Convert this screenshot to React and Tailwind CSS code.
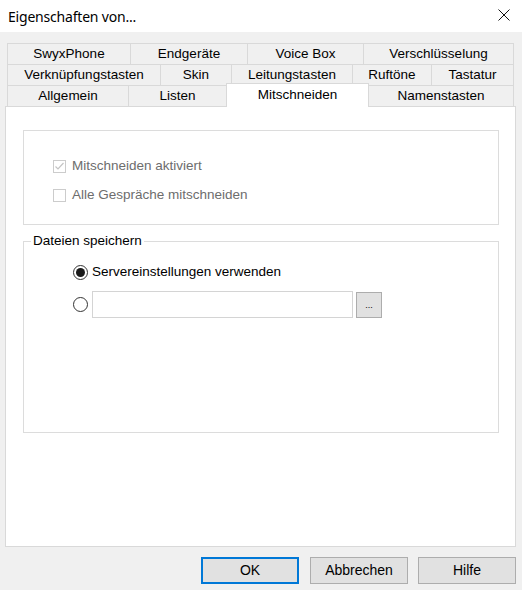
import React from "react";

const rows = [
  [
    ["SwyxPhone", 123],
    ["Endgeräte", 117],
    ["Voice Box", 116],
    ["Verschlüsselung", 151],
  ],
  [
    ["Verknüpfungstasten", 153],
    ["Skin", 71],
    ["Leitungstasten", 121],
    ["Ruftöne", 79],
    ["Tastatur", 83],
  ],
];

function Tab({ label, width, last }) {
  return (
    <div
      className={
        "h-[21px] flex items-center justify-center border-t border-l border-[#d9d9d9] bg-[#f0f0f0] text-black " +
        (last ? "border-r" : "")
      }
      style={{ width }}
    >
      {label}
    </div>
  );
}

function Checkbox({ checked, label }) {
  return (
    <div className="flex items-center h-[14px]">
      <div className="w-[13px] h-[13px] border border-[#cccccc] bg-white flex items-center justify-center">
        {checked && (
          <svg width="11" height="11" viewBox="0 0 11 11">
            <polyline points="1.5,5.5 4,8 9.5,2" fill="none" stroke="#c4c4c4" strokeWidth="1.2" />
          </svg>
        )}
      </div>
      <span className="ml-[6px] text-[#6d6d6d] text-[13.5px]">{label}</span>
    </div>
  );
}

function Radio({ checked }) {
  return (
    <div className="w-[15px] h-[15px] rounded-full border border-[#333333] bg-white flex items-center justify-center shrink-0">
      {checked && <div className="w-[9px] h-[9px] rounded-full bg-[#1a1a1a]" />}
    </div>
  );
}

function DialogButton({ children, primary, className = "" }) {
  return (
    <div
      className={
        "w-[98px] h-[27px] flex items-center justify-center bg-[#e1e1e1] text-black text-[14px] " +
        (primary ? "border-2 border-[#0078d7] " : "border border-[#adadad] ") +
        className
      }
    >
      {children}
    </div>
  );
}

export default function App() {
  return (
    <div
      className="w-[522px] h-[590px] bg-[#f0f0f0] text-[13.5px] overflow-hidden"
      style={{ fontFamily: '"Liberation Sans", Arial, sans-serif' }}
    >
      {/* title bar */}
      <div className="h-[32px] bg-white flex items-center justify-between pl-[8px] pr-[12px]">
        <span
          className="text-[14px] tracking-[-0.2px] text-black"
          style={{ fontFamily: '"Noto Sans", "Open Sans", sans-serif' }}
        >
          Eigenschaften von...
        </span>
        <svg width="12" height="12" viewBox="0 0 12 12" className="mt-[-2px]">
          <path d="M0.5 0.5 L11.5 11.5 M11.5 0.5 L0.5 11.5" stroke="#111" strokeWidth="1" />
        </svg>
      </div>

      <div className="pl-[5px] pt-[11px]">
        {/* tab strip */}
        <div className="pl-[2px]">
          {rows.map((row, i) => (
            <div key={i} className="flex">
              {row.map(([label, w], j) => (
                <Tab key={label} label={label} width={w} last={j === row.length - 1} />
              ))}
            </div>
          ))}
          <div className="flex h-[21px]">
            <Tab label="Allgemein" width={121} />
            <div className="w-[98px] h-[21px] flex items-center justify-center border-t border-l border-[#d9d9d9] bg-[#f0f0f0]">
              Listen
            </div>
            <div className="relative z-10 w-[143px] h-[24px] mt-[-2px] flex items-center justify-center border-t border-l border-r border-[#d9d9d9] bg-white">
              Mitschneiden
            </div>
            <div className="w-[145px] h-[21px] flex items-center justify-center border-t border-r border-[#d9d9d9] bg-[#f0f0f0]">
              Namenstasten
            </div>
          </div>
        </div>

        {/* page */}
        <div className="w-[511px] h-[441px] bg-white border border-[#d9d9d9] pl-[17px] pt-[23px]">
          <div className="w-[476px] h-[95px] border border-[#dcdcdc] pl-[29px] pt-[28px] flex flex-col gap-[15px]">
            <Checkbox checked label="Mitschneiden aktiviert" />
            <Checkbox label="Alle Gespräche mitschneiden" />
          </div>

          <div className="relative mt-[16px] w-[476px] h-[192px] border border-[#dcdcdc]">
            <span className="absolute left-[7px] top-[-9px] bg-white px-[2px] leading-[16px] text-black text-[13.5px]">
              Dateien speichern
            </span>
            <div className="pl-[49px] pt-[23px] flex flex-col">
              <div className="flex items-center h-[15px]">
                <Radio checked />
                <span className="ml-[4px] text-black text-[13.5px]">Servereinstellungen verwenden</span>
              </div>
              <div className="flex items-center mt-[11px]">
                <Radio />
                <div className="ml-[4px] w-[261px] h-[27px] border border-[#d4d4d4] bg-white" />
                <div className="ml-[3px] w-[26px] h-[26px] border border-[#adadad] bg-[#e1e1e1] flex items-end justify-center pb-[7px] text-[9px] leading-none text-black">
                  ...
                </div>
              </div>
            </div>
          </div>
        </div>

        {/* dialog buttons */}
        <div className="flex justify-end pr-[6px] mt-[10px]">
          <DialogButton primary>OK</DialogButton>
          <DialogButton className="ml-[11px]">Abbrechen</DialogButton>
          <DialogButton className="ml-[10px]">Hilfe</DialogButton>
        </div>
      </div>
    </div>
  );
}
